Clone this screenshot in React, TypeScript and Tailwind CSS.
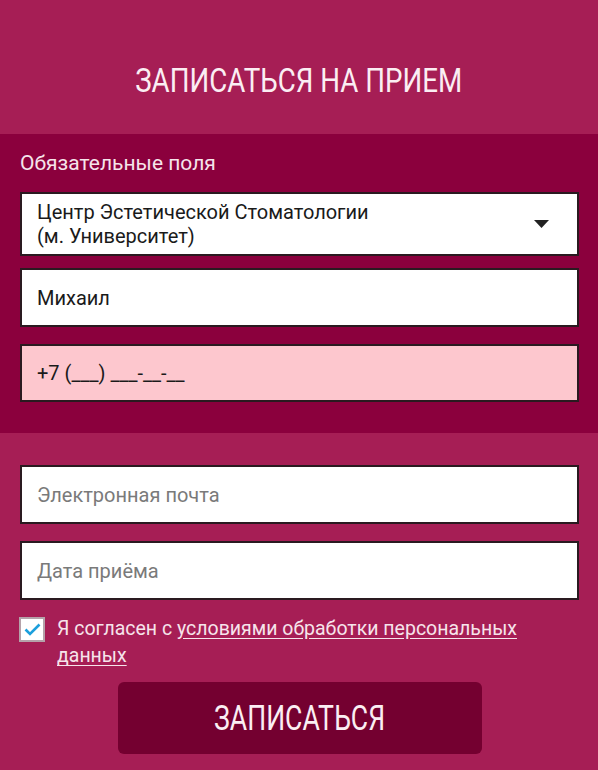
import { useState } from "react";

const fieldBase =
  "w-full border-2 border-[#2a1a20] flex items-center pl-[15px] pr-[28px] text-[20px] leading-[24px]";

function Field({
  value,
  placeholder,
  className,
}: {
  value?: string;
  placeholder?: string;
  className?: string;
}) {
  return (
    <div className={`${fieldBase} h-[59px] bg-white ${className ?? ""}`}>
      {value ? (
        <span className="text-[#1a1a1a]">{value}</span>
      ) : (
        <span className="text-[#7a7a7a]">{placeholder}</span>
      )}
    </div>
  );
}

export default function App() {
  const [agreed, setAgreed] = useState(true);

  return (
    <div className="w-[598px] min-h-[770px] bg-[#a61e55] font-['Roboto','Liberation_Sans',sans-serif] overflow-hidden">
      {/* Заголовок */}
      <div className="h-[134px] flex items-center justify-center pt-[26px]">
        <h1 className="inline-block scale-x-[0.84] text-[33px] leading-none font-normal text-[#fbeef3] whitespace-nowrap">
          ЗАПИСАТЬСЯ НА ПРИЕМ
        </h1>
      </div>

      {/* Обязательные поля */}
      <div className="bg-[#8b003d] pl-[20px] pr-[19px] pt-[17px] pb-[31px]">
        <div className="text-[21px] leading-[24px] text-[#f6e4eb]">
          Обязательные поля
        </div>

        <div
          className={`${fieldBase} mt-[17px] h-[64px] bg-white justify-between`}
        >
          <span className="text-[#1a1a1a] leading-[24px]">
            Центр Эстетической Стоматологии
            <br />
            (м. Университет)
          </span>
          <svg width="15" height="8" viewBox="0 0 15 8" className="shrink-0">
            <path d="M0 0 H15 L7.5 8 Z" fill="#222" />
          </svg>
        </div>

        <Field value="Михаил" className="mt-[12px]" />

        <div className={`${fieldBase} mt-[17px] h-[58px] bg-[#fdc7ce]`}>
          <span className="text-[#1a1a1a]">+7 (___) ___-__-__</span>
        </div>
      </div>

      {/* Необязательные поля */}
      <div className="pl-[20px] pr-[19px] pt-[32px] pb-[16px]">
        <Field placeholder="Электронная почта" />
        <Field placeholder="Дата приёма" className="mt-[17px]" />

        <label className="mt-[15px] flex items-start gap-[12px] cursor-pointer">
          <button
            type="button"
            onClick={() => setAgreed(!agreed)}
            className="ml-[-1px] mt-[2px] w-[26px] h-[25px] shrink-0 bg-white border-2 border-[#b5a2aa] flex items-center justify-center"
          >
            {agreed && (
              <svg width="17" height="13" viewBox="0 0 17 13">
                <path
                  d="M1.5 6.5 L6 11 L15.5 1.5"
                  fill="none"
                  stroke="#1c9fdc"
                  strokeWidth="2.6"
                />
              </svg>
            )}
          </button>
          <span className="text-[19.5px] leading-[27px] text-[#f6e4eb]">
            Я согласен с{" "}
            <a href="#" className="underline underline-offset-[3px]">
              условиями обработки персональных данных
            </a>
          </span>
        </label>

        <div className="flex justify-center mt-[13px]">
          <button
            type="button"
            className="w-[364px] h-[72px] rounded-[6px] bg-[#740030] flex items-center justify-center"
          >
            <span className="inline-block scale-x-[0.76] text-[35px] leading-none text-[#fbeef3] whitespace-nowrap">
              ЗАПИСАТЬСЯ
            </span>
          </button>
        </div>
      </div>
    </div>
  );
}
